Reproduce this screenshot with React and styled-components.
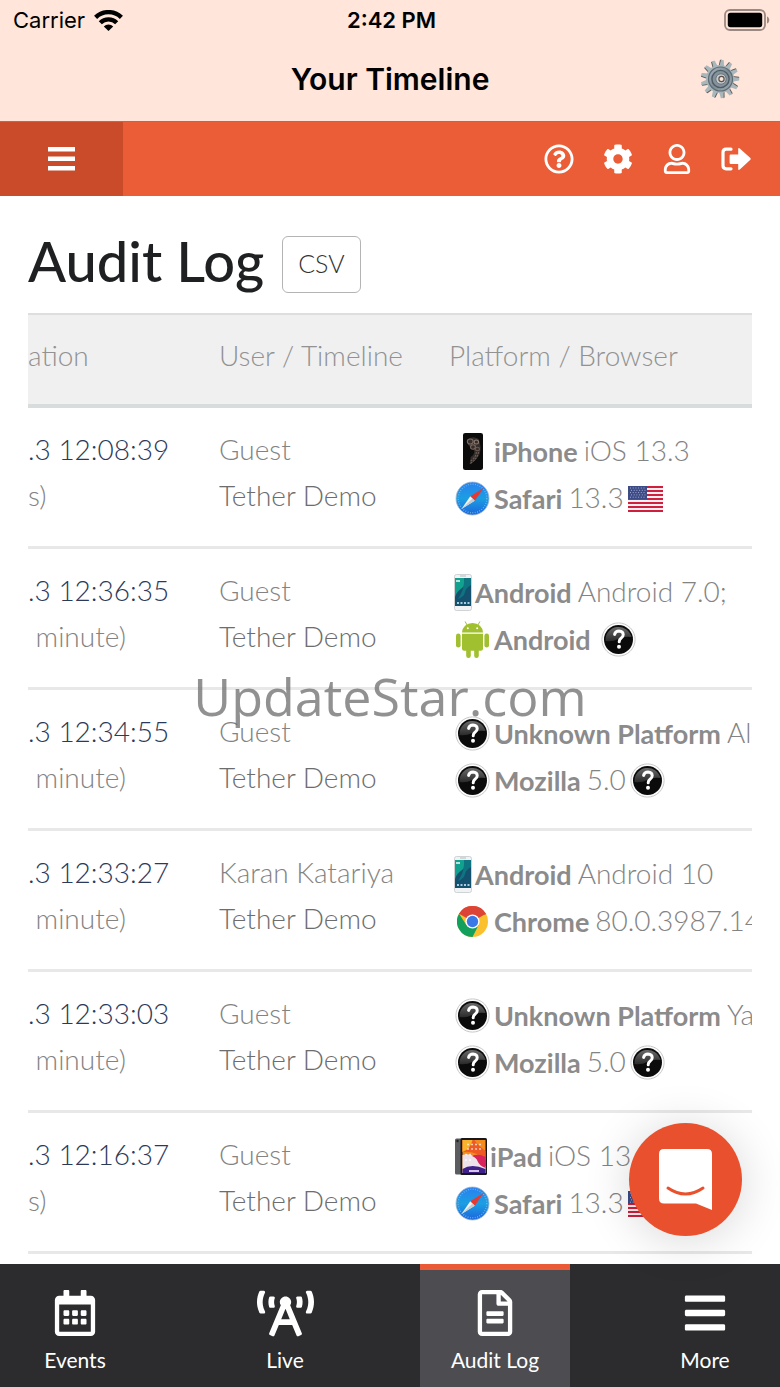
import React from "react";
import styled, { createGlobalStyle } from "styled-components";
import {
  FaBars,
  FaBroadcastTower,
  FaCog,
  FaRegCalendarAlt,
  FaRegFileAlt,
  FaRegQuestionCircle,
  FaRegUser,
} from "react-icons/fa";

const GlobalStyle = createGlobalStyle`
  * {
    box-sizing: border-box;
  }

  body {
    margin: 0;
    background: #fff;
    font-family: Lato, "Liberation Sans", sans-serif;
  }

  button {
    font-family: inherit;
    cursor: pointer;
  }
`;

const Page = styled.div`
  position: relative;
  display: flex;
  flex-direction: column;
  height: 100vh;
  overflow: hidden;
`;

const SystemHeader = styled.header`
  background: #ffe5da;
  border-bottom: 1px solid #b9694f;
  font-family: Inter, "Liberation Sans", sans-serif;
  color: #000;
`;

const StatusBar = styled.div`
  display: grid;
  grid-template-columns: 1fr auto 1fr;
  align-items: center;
  height: 40px;
  padding: 0 10px 0 13px;
  font-size: 22px;
`;

const Carrier = styled.div`
  display: flex;
  align-items: center;
  gap: 9px;
`;

const Clock = styled.div`
  font-weight: 600;
`;

const Battery = styled.div`
  display: flex;
  justify-content: flex-end;
`;

const TitleBar = styled.div`
  display: grid;
  grid-template-columns: 1fr auto 1fr;
  align-items: center;
  height: 81px;
  padding: 0 40px 4px;
`;

const ScreenTitle = styled.div`
  grid-column: 2;
  font-size: 30px;
  font-weight: 600;
`;

const GearButton = styled.button`
  justify-self: end;
  display: flex;
  padding: 0;
  border: 0;
  background: none;
`;

const Toolbar = styled.div`
  display: flex;
  justify-content: space-between;
  height: 74px;
  flex-shrink: 0;
  background: #eb5d37;
  color: #fff;
`;

const MenuButton = styled.button`
  width: 123px;
  display: flex;
  align-items: center;
  justify-content: center;
  padding: 0;
  border: 0;
  background: #ca4b29;
`;

const ToolbarActions = styled.div`
  display: flex;
  align-items: center;
  gap: 29px;
  padding-right: 29px;
`;

const ToolbarButton = styled.button`
  display: flex;
  padding: 0;
  border: 0;
  background: none;
  color: #fff;
`;

const Main = styled.main`
  flex: 1;
  min-height: 0;
  overflow: hidden;
  padding: 40px 28px 0;
`;

const Heading = styled.div`
  display: flex;
  align-items: flex-start;
  gap: 18px;
  height: 57px;
  margin-bottom: 20px;
`;

const Title = styled.h1`
  margin: 0;
  font-size: 56px;
  line-height: 50px;
  font-weight: 500;
  color: #1e2021;
`;

const CsvButton = styled.button`
  height: 57px;
  padding: 0 15px 4px;
  border: 1px solid #b4b4b4;
  border-radius: 6px;
  background: #fff;
  color: #333;
  font-size: 25px;
  font-weight: 300;
`;

const TableWrap = styled.div`
  overflow: hidden;
`;

const Table = styled.table`
  width: 100%;
  table-layout: fixed;
  border-collapse: separate;
  border-spacing: 0;
  font-size: 28px;
  font-weight: 300;
  line-height: 46px;
  white-space: nowrap;
  color: #777;
`;

const HeadCell = styled.th`
  width: ${({ $width }) => $width || "auto"};
  height: 95px;
  padding: 0 0 10px;
  border-top: 2px solid #dcdedf;
  border-bottom: 4px solid #d9dcdd;
  background: #f0f0f0;
  color: #929292;
  font-weight: 300;
  text-align: left;
`;

const Cell = styled.td`
  padding: 18px 0 24px;
  border-bottom: 3px solid #e8e8e8;
  vertical-align: top;
`;

const AgentCell = styled(Cell)`
  padding-top: 20px;
`;

const Time = styled.div`
  color: #2c3a5a;
`;

const Note = styled.div`
  color: #838383;
  white-space: pre;
`;

const User = styled.div`
  color: #838383;
`;

const Timeline = styled.div`
  color: #6d6d6d;
`;

const Agent = styled.div`
  display: flex;
  align-items: center;
  height: 47px;
  padding-left: 5px;
  color: #838383;

  svg {
    flex-shrink: 0;
  }
`;

const AgentIcon = styled.span`
  display: flex;
  flex-shrink: 0;
  justify-content: center;
  width: ${({ $width }) => $width}px;
  margin-right: 3px;
`;

const AgentName = styled.span`
  margin-right: 6px;
  font-size: 27px;
  font-weight: 700;
  color: #8b8b8b;
`;

const AgentVersion = styled.span`
  margin-right: 4px;
  padding-bottom: 4px;
`;

const ChatButton = styled.button`
  position: absolute;
  right: 38px;
  bottom: 151px;
  display: flex;
  align-items: center;
  justify-content: center;
  width: 113px;
  height: 113px;
  padding: 0;
  border: 0;
  border-radius: 50%;
  background: #e9512e;
  box-shadow: 0 4px 48px rgba(0, 0, 0, 0.16);
`;

const Watermark = styled.div`
  position: absolute;
  inset: 0;
  display: flex;
  align-items: center;
  justify-content: center;
  padding-top: 4px;
  font-family: "Open Sans", "Noto Sans", sans-serif;
  font-size: 52px;
  color: rgba(110, 110, 110, 0.76);
  pointer-events: none;
`;

const TabBar = styled.nav`
  display: flex;
  justify-content: space-between;
  height: 123px;
  flex-shrink: 0;
  background: #2c2c2e;
`;

const Tab = styled.a`
  display: flex;
  flex-direction: column;
  align-items: center;
  width: 150px;
  padding-top: 20px;
  border-top: 6px solid ${({ $active }) => ($active ? "#eb5a36" : "transparent")};
  background: ${({ $active }) => ($active ? "#4d4c50" : "transparent")};
  color: #fff;
  font-size: 21px;
  line-height: 28px;
  text-decoration: none;
`;

const TabIcon = styled.span`
  display: flex;
  align-items: center;
  height: 46px;
  margin-bottom: 10px;
`;

const WifiIcon = () => (
  <svg width="29" height="21" viewBox="0 0 29 21" aria-hidden="true">
    <g fill="none" stroke="#000" strokeWidth="4.400">
      <path d="M1.600 7.400A18.400 18.400 0 0 1 27.400 7.400" />
      <path d="M6.300 12.700A11.700 11.700 0 0 1 22.700 12.700" />
    </g>
    <path d="M9.800 16.400A6.600 6.600 0 0 1 19.200 16.400L14.500 21Z" fill="#000" />
  </svg>
);

const BatteryIcon = () => (
  <svg width="46" height="22" viewBox="0 0 46 22" aria-hidden="true">
    <rect x="1" y="1" width="40" height="20" rx="5" fill="none" stroke="#9b8983" strokeWidth="1.800" />
    <rect x="3.800" y="3.800" width="34.400" height="14.400" rx="2.600" fill="#000" />
    <path d="M43 7.500c3 1 3 6 0 7z" fill="#9b8983" />
  </svg>
);

const teeth = Array.from({ length: 13 }, (_, i) => (i * 360) / 13);

const GearIcon = () => (
  <svg width="40" height="40" viewBox="0 0 40 40" aria-hidden="true">
    <defs>
      <linearGradient id="gearSteel" x1="0" y1="0" x2="1" y2="1">
        <stop offset="0" stopColor="#a9b8bf" />
        <stop offset="0.500" stopColor="#7c8b94" />
        <stop offset="1" stopColor="#a4aeb4" />
      </linearGradient>
    </defs>
    {teeth.map((a) => (
      <g key={a} transform={`rotate(${a + 8} 20 20)`}>
        <path d="M16.800 8 17.300 1.200 18.700.6 19.200 8z" fill="#5a5755" />
        <path d="M17.600 8 18.300.8h2.800L22.400 8z" fill="#a9b6bb" />
      </g>
    ))}
    <circle cx="20" cy="20" r="14" fill="#a7b4ba" />
    <circle cx="20.500" cy="20" r="12" fill="url(#gearSteel)" stroke="#5d6b74" strokeWidth="1.200" />
    <circle cx="20.500" cy="20" r="8.600" fill="#84929b" stroke="#4f5c66" strokeWidth="1.400" />
    <circle cx="21" cy="20" r="5.200" fill="#c5cbce" stroke="#6b767d" strokeWidth="1" />
    <circle cx="21.500" cy="20" r="2.600" fill="#f7e6dd" stroke="#5c5048" strokeWidth="1.200" />
  </svg>
);

const MenuIcon = () => (
  <svg width="27" height="24" viewBox="0 0 27 24" fill="#fff" aria-hidden="true">
    <path d="M0 0h27v4.600H0zM0 9.500h27v4.600H0zM0 19h27v4.600H0z" />
  </svg>
);

const SignOutIcon = () => (
  <svg width="30" height="24" viewBox="0 0 30 24" aria-hidden="true">
    <path
      d="M10 2.200H5.200Q2 2.200 2 5.400v13.200q0 3.200 3.200 3.200h4.800"
      fill="none"
      stroke="#fff"
      strokeWidth="3.200"
      strokeLinecap="round"
    />
    <path
      d="M8.600 8.800q0-1.200 1.200-1.200h7.400V2.200q0-2 1.600-.8l10.300 9.300q1.200 1.200 0 2.400l-10.300 9.500q-1.600 1.200-1.600-.8V17H9.800q-1.200 0-1.200-1.200z"
      fill="#fff"
    />
  </svg>
);

const IphoneIcon = () => (
  <svg width="20" height="37" viewBox="0 0 18 37" preserveAspectRatio="none" aria-hidden="true">
    <rect width="18" height="37" rx="2" fill="#0c0b0b" />
    <path d="M4 7q4-5 10-1 3 8 1 15-3 7-9 10l1-7q6-5 1-9-5-3-4-8z" fill="#352d2a" />
    <circle cx="6.500" cy="8.500" r="2.600" fill="none" stroke="#7b6a62" />
    <circle cx="12" cy="9" r="2" fill="none" stroke="#8b7a72" />
    <circle cx="9" cy="14" r="2.200" fill="none" stroke="#7b6a62" />
    <circle cx="13" cy="16" r="1.800" fill="none" stroke="#6b5b54" />
    <path d="M14 19q-1 7-8 12M12 19q0 5-5 9" fill="none" stroke="#6f615a" strokeDasharray="2 1" />
  </svg>
);

const PixelIcon = () => (
  <svg width="18" height="37" viewBox="0 0 18 37" aria-hidden="true">
    <rect x=".5" y=".5" width="17" height="36" rx="2" fill="#f1f2f3" stroke="#cfd3d5" />
    <rect x="1" y="4" width="16" height="28" fill="#14516f" />
    <path d="M1 4h9q4 5-2 10-5 3-7 9z" fill="#12a08f" />
    <path d="M10 4h7v7q-5 2-7 10-3 3-6 4 7-10 6-21z" fill="#0d7480" />
    <path d="M3 29h2M6.500 29h2M10 29h2M13.500 29h2" stroke="#a9cbe0" strokeWidth="1.800" />
    <path d="M6 2h6" stroke="#b6bbbd" strokeWidth="1" />
    <path d="M2 6h4v2H2z" fill="#b7e6df" />
  </svg>
);

const IpadIcon = () => (
  <svg width="32" height="37" viewBox="0 0 32 37" aria-hidden="true">
    <rect width="14" height="36" y=".5" rx="1.500" fill="#5b5c60" />
    <circle cx="2.500" cy="3" r="1.200" fill="#222" />
    <rect x="5.500" width="26.500" height="37" rx="1.500" fill="#18171c" />
    <rect x="7.500" y="2" width="23" height="33" fill="#f58a1f" />
    <path d="M7.500 14q12-2 23 8v-9q-8-6-11-11h-12z" fill="#ef5a24" />
    <path d="M7.500 2h10q-2 9-10 12z" fill="#f7b32b" />
    <path d="M7.500 17q10-3 16 6 4 6 7 5v7h-23z" fill="#ece3ea" />
    <path d="M17 18q6-3 13.500 1v11q-6-2-8-7-1-3-5.500-5z" fill="#d8235c" />
    <path d="M7.500 31q9-6 23 0v4h-23z" fill="#40218a" />
    <path d="M12 6.500h16M12 11h16M10 16.500h7M10 22h7" stroke="#fff" strokeOpacity=".7" strokeWidth="1.600" strokeDasharray="2 2" />
    <path d="M14 33h10" stroke="#e9d8f2" strokeWidth="1.800" />
  </svg>
);

const SafariIcon = () => (
  <svg width="35" height="35" viewBox="0 0 35 35" aria-hidden="true">
    <defs>
      <linearGradient id="safariBlue" x1="0" y1="0" x2="0" y2="1">
        <stop offset="0" stopColor="#2a7ff0" />
        <stop offset="0.500" stopColor="#1b9fe2" />
        <stop offset="1" stopColor="#1d64dc" />
      </linearGradient>
    </defs>
    <circle cx="17.500" cy="17.500" r="16.500" fill="url(#safariBlue)" stroke="#9fb6cf" strokeWidth=".8" />
    <circle cx="17.500" cy="17.500" r="14.300" fill="none" stroke="#6db8ee" strokeWidth="1.400" strokeDasharray=".8 1.600" />
    <path d="M28.500 7 15.300 15.300 19.700 19.700z" fill="#e8382f" />
    <path d="M6.500 28 15.300 15.300 19.700 19.700z" fill="#f3f3f5" />
    <path d="M6.500 28 17.500 17.500 19.700 19.700z" fill="#c6ccd3" />
  </svg>
);

const AndroidIcon = () => (
  <svg width="33" height="37" viewBox="0 0 33 37" fill="#a1c030" aria-hidden="true">
    <path d="M6 11.500a10.500 9.500 0 0 1 21 0z" />
    <path d="M11 4 9.300.8M22 4 23.700.8" stroke="#a1c030" strokeWidth="1" strokeLinecap="round" />
    <path d="M6 12.800h21v15q0 2-2 2H8q-2 0-2-2z" />
    <rect x="0" y="12.500" width="4.600" height="14" rx="2.300" />
    <rect x="28.400" y="12.500" width="4.600" height="14" rx="2.300" />
    <rect x="10.200" y="25" width="4.600" height="12" rx="2.300" />
    <rect x="18.200" y="25" width="4.600" height="12" rx="2.300" />
    <circle cx="11.800" cy="7.300" r="1" fill="#fff" />
    <circle cx="21.200" cy="7.300" r="1" fill="#fff" />
  </svg>
);

const ChromeIcon = () => (
  <svg width="31" height="31" viewBox="0 0 48 48" aria-hidden="true">
    <circle cx="24" cy="24" r="24" fill="#fbc02d" />
    <path d="M24 24 3.200 12A24 24 0 0 1 44.800 12z" fill="#dc4437" />
    <path d="M24 13h20.800A24 24 0 0 0 3.200 12z" fill="#dc4437" />
    <path d="M3.200 12A24 24 0 0 0 24 48l9.500-18.500L24 24l-9.500 5.500z" fill="#12a05c" />
    <circle cx="24" cy="24" r="11" fill="#fff" />
    <circle cx="24" cy="24" r="8.800" fill="#3b78e7" />
  </svg>
);

const UnknownIcon = () => (
  <svg width="35" height="35" viewBox="0 0 35 35" aria-hidden="true">
    <defs>
      <linearGradient id="unknownGloss" x1="0" y1="0" x2="0" y2="1">
        <stop offset="0" stopColor="#6a6a6a" />
        <stop offset="1" stopColor="#2a2a2a" />
      </linearGradient>
    </defs>
    <circle cx="17.500" cy="17.500" r="16.600" fill="#fcfcfc" stroke="#c9c9c9" strokeWidth="1" />
    <circle cx="17.500" cy="17.500" r="14.500" fill="#0b0b0b" />
    <path d="M4.500 19A13.200 13.200 0 0 1 30.500 15Q22 14 17 17T4.500 19z" fill="url(#unknownGloss)" />
    <path
      d="M13.600 12.400q.8-3.400 4.400-3.400 4.200.2 4.200 3.800 0 2-2.200 3.500-1.800 1.300-1.800 3.500"
      fill="none"
      stroke="#fff"
      strokeWidth="3"
      strokeLinecap="round"
    />
    <circle cx="18" cy="24.800" r="2" fill="#fff" />
  </svg>
);

const FlagIcon = () => (
  <svg width="35" height="26" viewBox="0 0 35 26" role="img" aria-label="United States">
    <rect width="35" height="26" fill="#f6eef0" />
    <path
      d="M0 1h35M0 5h35M0 9h35M0 13h35M0 17h35M0 21h35M0 25h35"
      stroke="#cf1f3c"
      strokeWidth="2"
    />
    <rect width="19" height="13" fill="#3c4a86" />
    <path
      d="M2 2h16M3 4.300h15M2 6.600h16M3 8.900h15M2 11.200h16"
      stroke="#a5aed2"
      strokeWidth="1"
      strokeDasharray="1 1.700"
    />
  </svg>
);

const ChatIcon = () => (
  <svg width="54" height="62" viewBox="0 0 54 62" aria-hidden="true">
    <path d="M5 0h43q5 0 5 5v56L37 54.500H5q-5 0-5-5V5q0-5 5-5z" fill="#fff" />
    <path d="M9 39q17.500 12 35 0" fill="none" stroke="#e9512e" strokeWidth="3" strokeLinecap="round" />
  </svg>
);

const icons = {
  iphone: { Icon: IphoneIcon, width: 37 },
  pixel: { Icon: PixelIcon, width: 18 },
  ipad: { Icon: IpadIcon, width: 33 },
  safari: { Icon: SafariIcon, width: 37 },
  android: { Icon: AndroidIcon, width: 37 },
  chrome: { Icon: ChromeIcon, width: 37 },
  unknown: { Icon: UnknownIcon, width: 37 },
};

const safari = { icon: "safari", name: "Safari", version: "13.3", Region: FlagIcon };
const mozilla = { icon: "unknown", name: "Mozilla", version: "5.0", Region: UnknownIcon };

const entries = [
  {
    time: ".3 12:08:39",
    note: "s)",
    user: "Guest",
    platform: { icon: "iphone", name: "iPhone", version: "iOS 13.3" },
    browser: safari,
  },
  {
    time: ".3 12:36:35",
    note: " minute)",
    user: "Guest",
    platform: { icon: "pixel", name: "Android", version: "Android 7.0;" },
    browser: { icon: "android", name: "Android", version: "", Region: UnknownIcon },
  },
  {
    time: ".3 12:34:55",
    note: " minute)",
    user: "Guest",
    platform: { icon: "unknown", name: "Unknown Platform", version: "Al" },
    browser: mozilla,
  },
  {
    time: ".3 12:33:27",
    note: " minute)",
    user: "Karan Katariya",
    platform: { icon: "pixel", name: "Android", version: "Android 10" },
    browser: { icon: "chrome", name: "Chrome", version: "80.0.3987.14" },
  },
  {
    time: ".3 12:33:03",
    note: " minute)",
    user: "Guest",
    platform: { icon: "unknown", name: "Unknown Platform", version: "Ya" },
    browser: mozilla,
  },
  {
    time: ".3 12:16:37",
    note: "s)",
    user: "Guest",
    platform: { icon: "ipad", name: "iPad", version: "iOS 13.3" },
    browser: safari,
  },
];

const tabs = [
  { label: "Events", icon: <FaRegCalendarAlt size={46} /> },
  { label: "Live", icon: <FaBroadcastTower size={57} /> },
  { label: "Audit Log", icon: <FaRegFileAlt size={46} />, active: true },
  { label: "More", icon: <FaBars size={46} /> },
];

const AgentLine = ({ icon, name, version, Region }) => {
  const { Icon, width } = icons[icon];

  return (
    <Agent>
      <AgentIcon $width={width}>
        <Icon />
      </AgentIcon>
      <AgentName>{name}</AgentName>
      <AgentVersion>{version}</AgentVersion>
      {Region && <Region />}
    </Agent>
  );
};

const App = () => {
  return (
    <>
      <GlobalStyle />
      <Page>
        <SystemHeader>
          <StatusBar>
            <Carrier>
              Carrier <WifiIcon />
            </Carrier>
            <Clock>2:42 PM</Clock>
            <Battery>
              <BatteryIcon />
            </Battery>
          </StatusBar>
          <TitleBar>
            <ScreenTitle>Your Timeline</ScreenTitle>
            <GearButton aria-label="Settings">
              <GearIcon />
            </GearButton>
          </TitleBar>
        </SystemHeader>

        <Toolbar>
          <MenuButton aria-label="Menu">
            <MenuIcon />
          </MenuButton>
          <ToolbarActions>
            <ToolbarButton aria-label="Help">
              <FaRegQuestionCircle size={30} />
            </ToolbarButton>
            <ToolbarButton aria-label="Preferences">
              <FaCog size={30} />
            </ToolbarButton>
            <ToolbarButton aria-label="Account">
              <FaRegUser size={30} />
            </ToolbarButton>
            <ToolbarButton aria-label="Sign out">
              <SignOutIcon />
            </ToolbarButton>
          </ToolbarActions>
        </Toolbar>

        <Main>
          <Heading>
            <Title>Audit Log</Title>
            <CsvButton>CSV</CsvButton>
          </Heading>
          <TableWrap>
            <Table>
              <thead>
                <tr>
                  <HeadCell $width="191px">ation</HeadCell>
                  <HeadCell $width="230px">User / Timeline</HeadCell>
                  <HeadCell>Platform / Browser</HeadCell>
                </tr>
              </thead>
              <tbody>
                {entries.map((entry) => (
                  <tr key={entry.time}>
                    <Cell>
                      <Time>{entry.time}</Time>
                      <Note>{entry.note}</Note>
                    </Cell>
                    <Cell>
                      <User>{entry.user}</User>
                      <Timeline>Tether Demo</Timeline>
                    </Cell>
                    <AgentCell>
                      <AgentLine {...entry.platform} />
                      <AgentLine {...entry.browser} />
                    </AgentCell>
                  </tr>
                ))}
              </tbody>
            </Table>
          </TableWrap>
        </Main>

        <TabBar>
          {tabs.map(({ label, icon, active }) => (
            <Tab key={label} href="#" $active={active}>
              <TabIcon>{icon}</TabIcon>
              {label}
            </Tab>
          ))}
        </TabBar>

        <ChatButton aria-label="Open chat">
          <ChatIcon />
        </ChatButton>
        <Watermark>UpdateStar.com</Watermark>
      </Page>
    </>
  );
};

export default App;
